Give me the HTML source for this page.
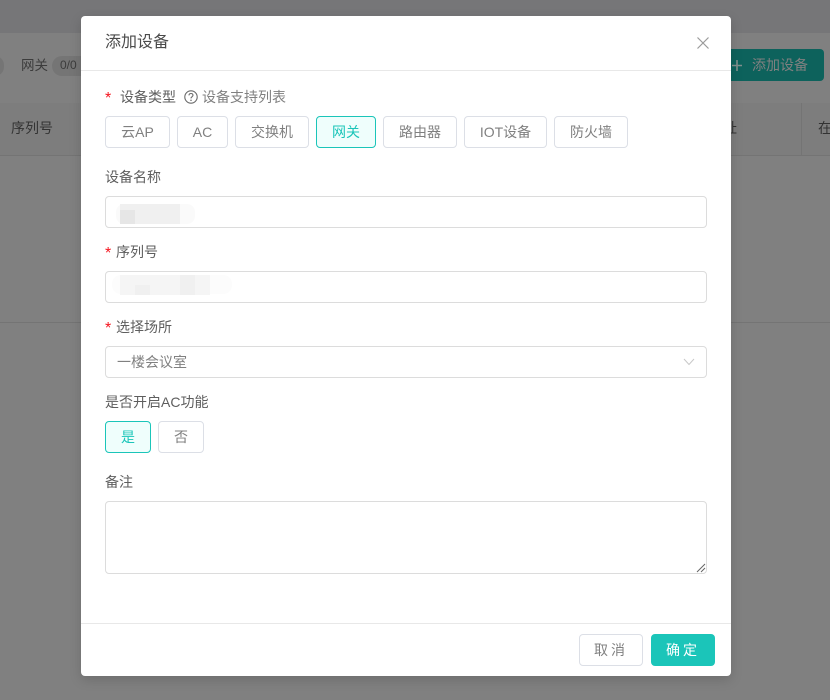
<!DOCTYPE html>
<html lang="zh-CN">
<head>
<meta charset="utf-8">
<title>添加设备</title>
<style>
html,body{margin:0;padding:0;width:830px;height:700px;overflow:hidden;background:#808080}
body{position:relative;font-family:"Liberation Sans","Noto Sans CJK SC",sans-serif;font-size:14px;color:#606266}
div,span{box-sizing:border-box}
.a{position:absolute}
.t{position:absolute;white-space:nowrap;line-height:20px}
.b{position:absolute;height:32px;top:116px;border:1px solid #dcdfe6;border-radius:4px;background:#fff;color:#808080;text-align:center;line-height:30px}
.on{border-color:#1bc5b9;background:#effefc;color:#1bc5b9}
.i{position:absolute;left:105px;width:602px;border:1px solid #dcdcdc;border-radius:4px;background:#fff}
.l{color:#5e5e5e}
.r{color:#f5141e;font-size:16px}
</style>
</head>
<body>
<!-- background page -->
<div class="a" style="left:0;top:0;width:830px;height:33px;background:#767678"></div>
<div class="a" style="left:0;top:33px;width:830px;height:70px;background:#808080"></div>
<div class="a" style="left:0;top:103px;width:830px;height:52px;background:#7d7d7d"></div>
<div class="a" style="left:0;top:155px;width:830px;height:1px;background:#747474"></div>
<div class="a" style="left:0;top:322px;width:830px;height:1px;background:#747474"></div>
<div class="a" style="left:801px;top:103px;width:1px;height:52px;background:#747474"></div>
<div class="a" style="left:-14px;top:56px;width:18px;height:20px;border-radius:10px;background:#757575"></div>
<div class="t" style="left:21px;top:56px;color:#3c3c3c;font-size:13.5px">网关</div>
<div class="a" style="left:52px;top:56px;width:40px;height:20px;border-radius:10px;background:#757575"></div>
<div class="t" style="left:60px;top:55px;color:#3c3c3c;font-size:12px">0/0</div>
<div class="t" style="left:11px;top:118px;color:#333">序列号</div>
<div class="t" style="left:723px;top:118px;color:#333">址</div>
<div class="t" style="left:818px;top:118px;color:#333">在</div>
<div class="a" style="left:700px;top:49px;width:124px;height:32px;border-radius:4px;background:#0d625c"></div>
<div class="t" style="left:752px;top:55px;color:#808080">添加设备</div>
<svg class="a" style="left:730px;top:57px" width="16" height="16" viewBox="0 0 16 16"><path d="M7 3v11M2 8.500h10" stroke="#808f8d" stroke-width="1.600" fill="none"/></svg>

<!-- modal -->
<div class="a" style="left:81px;top:16px;width:650px;height:660px;background:#fff;border-radius:4px;box-shadow:0 4px 12px rgba(0,0,0,.15)"></div>
<div class="t" style="left:105px;top:33px;font-size:16px;color:#4a4a4a">添加设备</div>
<svg class="a" style="left:695px;top:35px" width="16" height="16" viewBox="0 0 16 16"><path d="M2.500 2.500L13.500 13.500M13.500 2.500L2.500 13.500" stroke="#9a9a9a" stroke-width="1.200" fill="none"/></svg>
<div class="a" style="left:81px;top:70px;width:650px;height:1px;background:#e8e8e8"></div>

<div class="t r" style="left:105px;top:89px">*</div>
<div class="t l" style="left:120px;top:87px">设备类型</div>
<svg class="a" style="left:184px;top:90px" width="14" height="14" viewBox="0 0 14 14"><circle cx="7" cy="7" r="6.200" stroke="#6a6a6a" stroke-width="1.100" fill="none"/><path d="M5 5.400C5 4.200 5.900 3.500 7 3.500S9 4.200 9 5.300C9 6.700 7 6.700 7 8.400" stroke="#6a6a6a" stroke-width="1.100" fill="none"/><circle cx="7" cy="10.200" r=".75" fill="#6a6a6a"/></svg>
<div class="t" style="left:202px;top:87px;color:#808080">设备支持列表</div>

<div class="b" style="left:105px;width:65px">云AP</div>
<div class="b" style="left:177px;width:51px">AC</div>
<div class="b" style="left:235px;width:74px">交换机</div>
<div class="b on" style="left:316px;width:60px">网关</div>
<div class="b" style="left:383px;width:74px">路由器</div>
<div class="b" style="left:464px;width:83px">IOT设备</div>
<div class="b" style="left:554px;width:74px">防火墙</div>

<div class="t l" style="left:105px;top:167px">设备名称</div>
<div class="i" style="top:196px;height:32px"></div>
<div class="a" style="left:116px;top:204px;width:79px;height:20px;border-radius:8px;background:#fafafa"></div>
<div class="a" style="left:120px;top:204px;width:60px;height:20px;background:#f0f0f0"></div>
<div class="a" style="left:120px;top:210px;width:15px;height:14px;background:#e6e6e6"></div>

<div class="t r" style="left:105px;top:244px">*</div>
<div class="t l" style="left:116px;top:242px">序列号</div>
<div class="i" style="top:271px;height:32px"></div>
<div class="a" style="left:112px;top:275px;width:120px;height:19px;border-radius:9px;background:#fcfcfc"></div>
<div class="a" style="left:120px;top:275px;width:90px;height:20px;background:#f5f5f5"></div>
<div class="a" style="left:135px;top:285px;width:15px;height:10px;background:#f0f0f0"></div>
<div class="a" style="left:180px;top:275px;width:15px;height:20px;background:#f0f0f0"></div>

<div class="t r" style="left:105px;top:319px">*</div>
<div class="t l" style="left:116px;top:317px">选择场所</div>
<div class="i" style="top:346px;height:32px"></div>
<div class="t" style="left:117px;top:352px;color:#808080">一楼会议室</div>
<svg class="a" style="left:683px;top:357px" width="12" height="10" viewBox="0 0 12 10"><path d="M1 2l5 5.500 5-5.500" stroke="#c8c8c8" stroke-width="1" fill="none"/></svg>

<div class="t l" style="left:105px;top:392px">是否开启AC功能</div>
<div class="b on" style="left:105px;top:421px;width:46px">是</div>
<div class="b" style="left:158px;top:421px;width:46px">否</div>

<div class="t l" style="left:105px;top:472px">备注</div>
<div class="i" style="top:501px;height:73px"></div>
<svg class="a" style="left:696px;top:563px" width="10" height="10" viewBox="0 0 10 10"><path d="M1 9L9 1M5 9L9 5" stroke="#666" stroke-width="1" fill="none"/></svg>

<div class="a" style="left:81px;top:623px;width:650px;height:1px;background:#e8e8e8"></div>
<div class="b" style="left:579px;top:634px;width:64px;letter-spacing:3px">取消</div>
<div class="b" style="left:651px;top:634px;width:64px;background:#1bc5b9;border-color:#1bc5b9;color:#fff;letter-spacing:3px">确定</div>
</body>
</html>
